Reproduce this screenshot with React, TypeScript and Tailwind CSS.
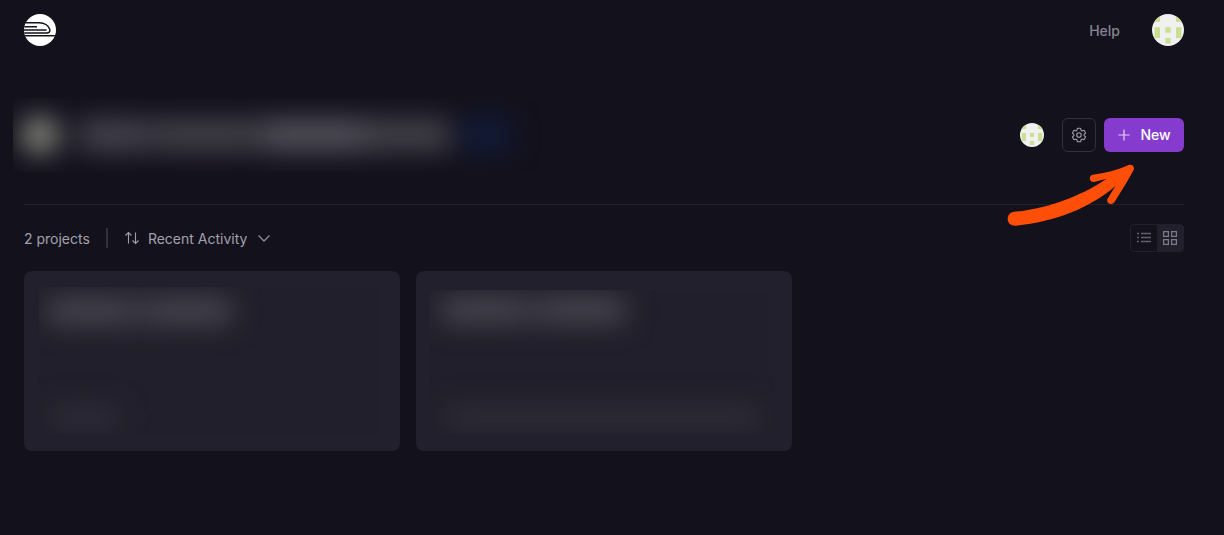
import { HiOutlineCog6Tooth } from "react-icons/hi2";

function TrainLogo() {
  return (
    <svg viewBox="0 0 32 32" className="size-8" aria-hidden="true">
      <defs>
        <clipPath id="logo-clip">
          <circle cx="16" cy="16" r="16" />
        </clipPath>
      </defs>
      <circle cx="16" cy="16" r="16" fill="#fff" />
      <g clipPath="url(#logo-clip)" fill="none" stroke="#13111c" strokeWidth="1.5">
        <path d="M1 8.7H15C20.5 8.7 24.6 11.6 25.7 15.3C26.3 17.6 25.3 19 22.5 19H0" />
        <path d="M0 12.7H13" />
        <path d="M0 16H22.5" />
        <path d="M0 21.8H32" />
      </g>
    </svg>
  );
}

function Avatar({ id, className }: { id: string; className: string }) {
  return (
    <svg viewBox="0 0 32 32" className={className} role="img" aria-label="Account">
      <defs>
        <clipPath id={id}>
          <circle cx="16" cy="16" r="16" />
        </clipPath>
      </defs>
      <g clipPath={`url(#${id})`}>
        <rect width="32" height="32" fill="#f0f0f0" />
        <path
          fill="#cbdf92"
          d="M2.6 2.6H8V8H2.6ZM24 2.6H29.4V8H24ZM2.6 13.3H8V24H2.6ZM24 13.3H29.4V24H24ZM13.3 13.3H18.7V18.7H13.3ZM13.3 24H18.7V29.4H13.3Z"
        />
      </g>
    </svg>
  );
}

function Arrow() {
  return (
    <svg
      viewBox="12 150 399 204"
      className="pointer-events-none absolute top-[42px] right-[47px] h-[68px] w-[133px]"
      aria-hidden="true"
    >
      <path
        fill="#ff4e08"
        d="M43 305C95 301 155 286 205 266C250 248 290 227 320 206L282 216C268 218 264 198 278 194C315 190 352 180 386 165C396 161 405 170 401 180C385 210 362 247 343 277C335 288 318 280 322 268L346 228C310 260 265 286 215 307C165 327 105 342 48 347C34 348 23 340 23 327C23 314 31 306 43 305Z"
      />
    </svg>
  );
}

function ProjectOne() {
  return (
    <a href="#" aria-label="First project" className="block h-[180px] rounded-lg bg-[#22202d] pt-4 pr-[22px] pb-4 pl-[15px]">
      <div className="h-full overflow-hidden bg-[#211f2b]">
        <div className="flex h-full flex-col justify-between pt-3 pb-2 pl-2 blur-[14px]">
          <div className="flex">
            <div className="h-6 w-20 bg-[#4c4a55]" />
            <div className="h-6 w-6 bg-[#403e49]" />
            <div className="h-6 w-20 bg-[#4c4a55]" />
          </div>
          <div className="ml-1 h-5 w-[68px] bg-[#312f3b]" />
        </div>
      </div>
    </a>
  );
}

function ProjectTwo() {
  return (
    <a href="#" aria-label="Second project" className="block h-[180px] rounded-lg bg-[#22202d] pt-[19px] pr-[17px] pb-4 pl-[13px]">
      <div className="h-full overflow-hidden bg-[#211f2b]">
        <div className="flex h-full flex-col justify-between px-3 pt-2 pb-2 blur-[14px]">
          <div className="flex">
            <div className="h-6 w-20 bg-[#4c4a55]" />
            <div className="h-6 w-6 bg-[#403e49]" />
            <div className="h-6 w-20 bg-[#4c4a55]" />
          </div>
          <div className="mx-1 h-5 bg-[#32303b]" />
        </div>
      </div>
    </a>
  );
}

export default function App() {
  return (
    <div className="min-h-screen bg-[#13111c] pr-10 pl-6 font-['Inter',sans-serif] text-sm text-[#a3a1ad]">
      <header className="flex h-[60px] items-center justify-between">
        <a href="#" aria-label="Home">
          <TrainLogo />
        </a>
        <nav className="flex items-center gap-8">
          <a href="#" className="pt-0.5 font-medium text-[#868491]">
            Help
          </a>
          <button type="button" aria-label="Account menu">
            <Avatar id="avatar-large" className="size-8" />
          </button>
        </nav>
      </header>

      <main className="pt-[38px]">
        <div className="flex items-center justify-between border-b border-[#22202d] pb-8">
          <div className="-ml-[11px] h-[74px] w-[540px] overflow-hidden">
            <div className="flex h-full items-center pl-[9px] blur-[14px]">
              <div className="size-9 rounded-full bg-[#95988b]" />
              <div className="ml-5 h-8 w-[68px] bg-[#474550]" />
              <div className="h-8 w-2 bg-[#33313b]" />
              <div className="h-8 w-[100px] bg-[#44424b]" />
              <div className="h-8 w-2 bg-[#33313b]" />
              <div className="h-8 w-[100px] bg-[#55535d]" />
              <div className="h-8 w-[88px] bg-[#45434c]" />
              <div className="ml-3 h-8 w-12 bg-[#111c3c]" />
            </div>
          </div>
          <div className="relative flex items-center">
            <Avatar id="avatar-small" className="mr-[18px] size-6" />
            <button
              type="button"
              aria-label="Settings"
              className="mr-2 flex size-[34px] items-center justify-center rounded-md border border-[#33313e] text-[#a09eaa]"
            >
              <HiOutlineCog6Tooth size={18} strokeWidth={1.5} />
            </button>
            <button
              type="button"
              className="flex h-[34px] w-20 items-center justify-center gap-[9px] rounded-md bg-[#853bce] font-medium text-white"
            >
              <svg viewBox="0 0 14 14" className="size-[14px]" aria-hidden="true">
                <path d="M7 1.5V12.5M1.5 7H12.5" stroke="#e3d2f5" strokeWidth="1.2" />
              </svg>
              New
            </button>
            <Arrow />
          </div>
        </div>

        <div className="flex items-center justify-between py-[19px]">
          <div className="flex items-center">
            <span className="pt-0.5">2 projects</span>
            <span className="mx-4 h-5 w-0.5 bg-[#33313e]" />
            <label className="flex items-center">
              <svg viewBox="0 0 16 16" className="mr-2 size-4" fill="none" stroke="#a09eaa" strokeWidth="1.1" aria-hidden="true">
                <path d="M4.5 13.5V2.5M1.5 5.5L4.5 2.5L7.5 5.5" />
                <path d="M11.5 2.5V13.5M8.5 10.5L11.5 13.5L14.5 10.5" />
              </svg>
              <select
                aria-label="Sort projects"
                className="appearance-none bg-transparent pt-0.5 [field-sizing:content]"
                defaultValue="recent"
              >
                <option value="recent">Recent Activity</option>
              </select>
              <svg viewBox="0 0 16 16" className="ml-[9px] size-4" fill="none" stroke="#8d8b98" strokeWidth="1.3" aria-hidden="true">
                <path d="M2.5 5.5L8 11L13.5 5.5" />
              </svg>
            </label>
          </div>
          <div className="flex h-7 w-[54px] overflow-hidden rounded border border-[#22202d]">
            <button type="button" aria-label="List view" className="flex flex-1 items-center justify-center">
              <svg viewBox="0 0 14 14" className="size-[14px]" fill="none" stroke="#625f6d" aria-hidden="true">
                <path d="M4 2.5H14M4 6.5H14M4 10.5H14" strokeWidth="1.3" />
                <path d="M0 2.5H2M0 6.5H2M0 10.5H2" strokeWidth="1.3" />
              </svg>
            </button>
            <button type="button" aria-label="Grid view" className="flex flex-1 items-center justify-center bg-[#22202d]">
              <svg viewBox="0 0 14 14" className="size-[14px]" fill="none" stroke="#7d7b88" strokeWidth="1.2" aria-hidden="true">
                <path d="M.6 .6H5.4V5.4H.6ZM8.6 .6H13.4V5.4H8.6ZM.6 8.6H5.4V13.4H.6ZM8.6 8.6H13.4V13.4H8.6Z" />
              </svg>
            </button>
          </div>
        </div>

        <div className="grid grid-cols-3 gap-4">
          <ProjectOne />
          <ProjectTwo />
        </div>
      </main>
    </div>
  );
}
